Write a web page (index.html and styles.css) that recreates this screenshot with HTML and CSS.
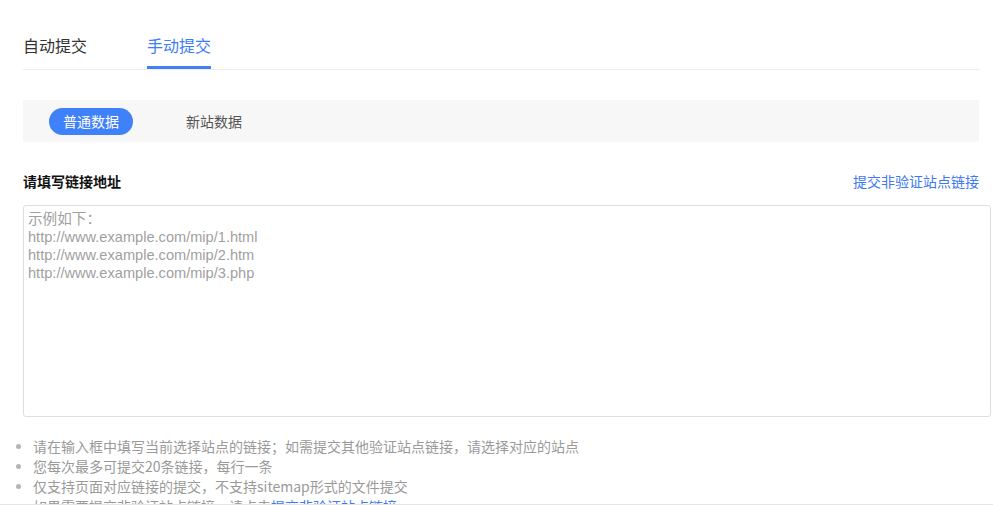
FILE: index.html
```html
<!DOCTYPE html>
<html lang="zh-CN">
<head>
<meta charset="utf-8">
<title>链接提交</title>
<link rel="stylesheet" href="styles.css">
</head>
<body>
<div class="page">
  <div class="tabs">
    <div class="tab">自动提交</div>
    <div class="tab active">手动提交</div>
  </div>

  <div class="switcher">
    <span class="pill active">普通数据</span>
    <span class="pill">新站数据</span>
  </div>

  <div class="label-row">
    <span class="label">请填写链接地址</span>
    <a class="link" href="#">提交非验证站点链接</a>
  </div>

  <textarea class="urls" placeholder="示例如下：&#10;http://www.example.com/mip/1.html&#10;http://www.example.com/mip/2.htm&#10;http://www.example.com/mip/3.php"></textarea>

  <ul class="tips">
    <li>请在输入框中填写当前选择站点的链接；如需提交其他验证站点链接，请选择对应的站点</li>
    <li>您每次最多可提交20条链接，每行一条</li>
    <li>仅支持页面对应链接的提交，不支持sitemap形式的文件提交</li>
    <li>如果需要提交非验证站点链接，请点击<a class="link" href="#">提交非验证站点链接</a></li>
  </ul>
</div>
<div class="footer-edge"></div>
</body>
</html>
```

FILE: styles.css
```css
html, body {
  margin: 0;
  padding: 0;
  background: #fff;
  overflow: hidden;
  height: 100%;
}
body {
  font-family: "Noto Sans CJK SC", "Liberation Sans", sans-serif;
  color: #333;
}
.page {
  padding: 0 14px 0 23px;
}
.tabs {
  display: flex;
  gap: 60px;
  border-bottom: 1px solid #ececec;
}
.tab {
  font-size: 16px;
  line-height: 24px;
  padding-top: 33px;
  padding-bottom: 9px;
  border-bottom: 3px solid transparent;
  color: #333;
}
.tab.active {
  color: #3d7ef7;
  border-bottom-color: #3f81f8;
}
.switcher {
  margin-top: 30px;
  height: 42px;
  background: #f7f7f7;
  display: flex;
  align-items: center;
  padding-left: 26px;
  gap: 39px;
}
.pill {
  font-size: 14px;
  line-height: 27px;
  height: 27px;
  padding: 0 14px;
  border-radius: 14px;
  color: #555;
}
.pill.active {
  background: #3f81f8;
  color: #fff;
}
.label-row {
  margin-top: 29px;
  display: flex;
  justify-content: space-between;
  align-items: center;
  line-height: 20px;
}
.label {
  font-size: 14px;
  font-weight: bold;
  color: #111;
}
.link {
  font-size: 14px;
  color: #4078f2;
  text-decoration: none;
}
.urls {
  display: block;
  box-sizing: border-box;
  margin-top: 14px;
  width: calc(100% + 12px);
  height: 212px;
  border: 1px solid #dedede;
  border-radius: 3px;
  padding: 4px 4px;
  font-family: "Liberation Sans", "Noto Sans CJK SC", sans-serif;
  font-size: 14.6px;
  line-height: 18px;
  resize: none;
  outline: none;
}
.urls::placeholder {
  color: #9f9f9f;
}
.tips {
  list-style: none;
  margin: 19px 0 0 -23px;
  padding: 0;
}
.tips li {
  position: relative;
  padding-left: 33px;
  font-size: 14px;
  line-height: 20px;
  color: #9a9a9a;
}
.tips li::before {
  content: "";
  position: absolute;
  left: 16px;
  top: 8px;
  width: 5px;
  height: 5px;
  border-radius: 50%;
  background: #b5b5b5;
}
.tips .link {
  color: #3f7cf4;
}
.footer-edge {
  position: fixed;
  left: 0;
  right: 0;
  bottom: 0;
  height: 1px;
  background: #e6e6e6;
}
```
